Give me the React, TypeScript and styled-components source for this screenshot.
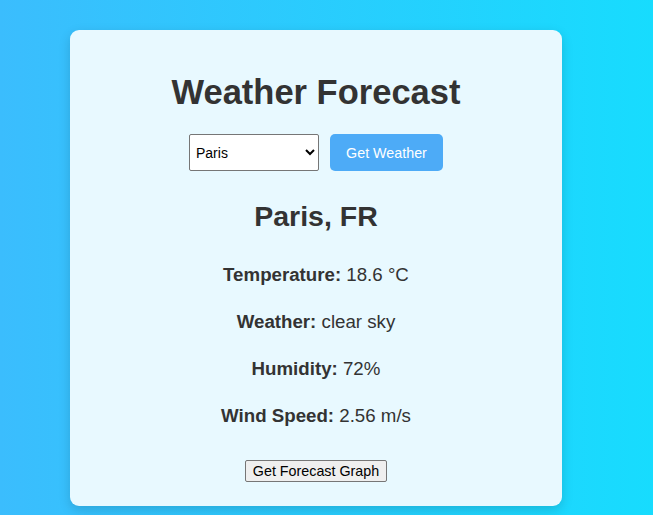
import React, { useState } from "react";
import styled, { createGlobalStyle } from "styled-components";

const GlobalStyle = createGlobalStyle`
  html, body { margin: 0; padding: 0; }
  body {
    min-height: 515px;
    font-family: Arial, "Liberation Sans", sans-serif;
    background: linear-gradient(90deg, #3bbdfd 0%, #17dcfe 100%);
  }
`;

const Page = styled.div`
  display: flex;
  justify-content: center;
  padding-top: 30px;
  padding-right: 21px;
`;

const Card = styled.div`
  width: 492px;
  box-sizing: border-box;
  background: #e8f9ff;
  border-radius: 9px;
  box-shadow: 0 4px 12px rgba(0, 0, 0, 0.15);
  padding: 40px 20px 24px;
  display: flex;
  flex-direction: column;
  align-items: center;
  color: #333;
`;

const Title = styled.h1`
  margin: 0;
  font-size: 34.5px;
  font-weight: bold;
  line-height: 44px;
`;

const Controls = styled.div`
  display: flex;
  gap: 11px;
  margin-top: 20px;
`;

const Select = styled.select`
  width: 130px;
  height: 37px;
  font-family: Arial, "Liberation Sans", sans-serif;
  font-size: 14px;
  padding: 0 2px;
  border: 1px solid #767676;
  border-radius: 2px;
  background: #fff;
  color: #000;
`;

const PrimaryButton = styled.button`
  width: 113px;
  height: 37px;
  border: none;
  border-radius: 5px;
  background: #4dabf7;
  color: #fff;
  font-family: Arial, "Liberation Sans", sans-serif;
  font-size: 14.3px;
`;

const City = styled.h2`
  margin: 29px 0 0;
  font-size: 28.5px;
  line-height: 32px;
  font-weight: bold;
`;

const InfoList = styled.div`
  display: flex;
  flex-direction: column;
  align-items: center;
  gap: 26px;
  margin-top: 32px;
`;

const Info = styled.p`
  margin: 0;
  font-size: 18.7px;
  line-height: 21px;
`;

const Label = styled.strong`
  font-weight: bold;
`;

const GraphButton = styled.button`
  margin-top: 34px;
  font-family: Arial, "Liberation Sans", sans-serif;
  font-size: 14.3px;
  padding: 1px 7px;
  height: 22px;
  border: 1px solid #767676;
  border-radius: 2px;
  background: #efefef;
  color: #000;
`;

export default function App() {
  const [city, setCity] = useState("Paris");
  return (
    <>
      <GlobalStyle />
      <Page>
        <Card>
          <Title>Weather Forecast</Title>
          <Controls>
            <Select value={city} onChange={(e) => setCity(e.target.value)}>
              <option>Paris</option>
              <option>London</option>
              <option>New York</option>
              <option>Tokyo</option>
            </Select>
            <PrimaryButton>Get Weather</PrimaryButton>
          </Controls>
          <City>Paris, FR</City>
          <InfoList>
            <Info><Label>Temperature:</Label> 18.6 °C</Info>
            <Info><Label>Weather:</Label> clear sky</Info>
            <Info><Label>Humidity:</Label> 72%</Info>
            <Info><Label>Wind Speed:</Label> 2.56 m/s</Info>
          </InfoList>
          <GraphButton>Get Forecast Graph</GraphButton>
        </Card>
      </Page>
    </>
  );
}
